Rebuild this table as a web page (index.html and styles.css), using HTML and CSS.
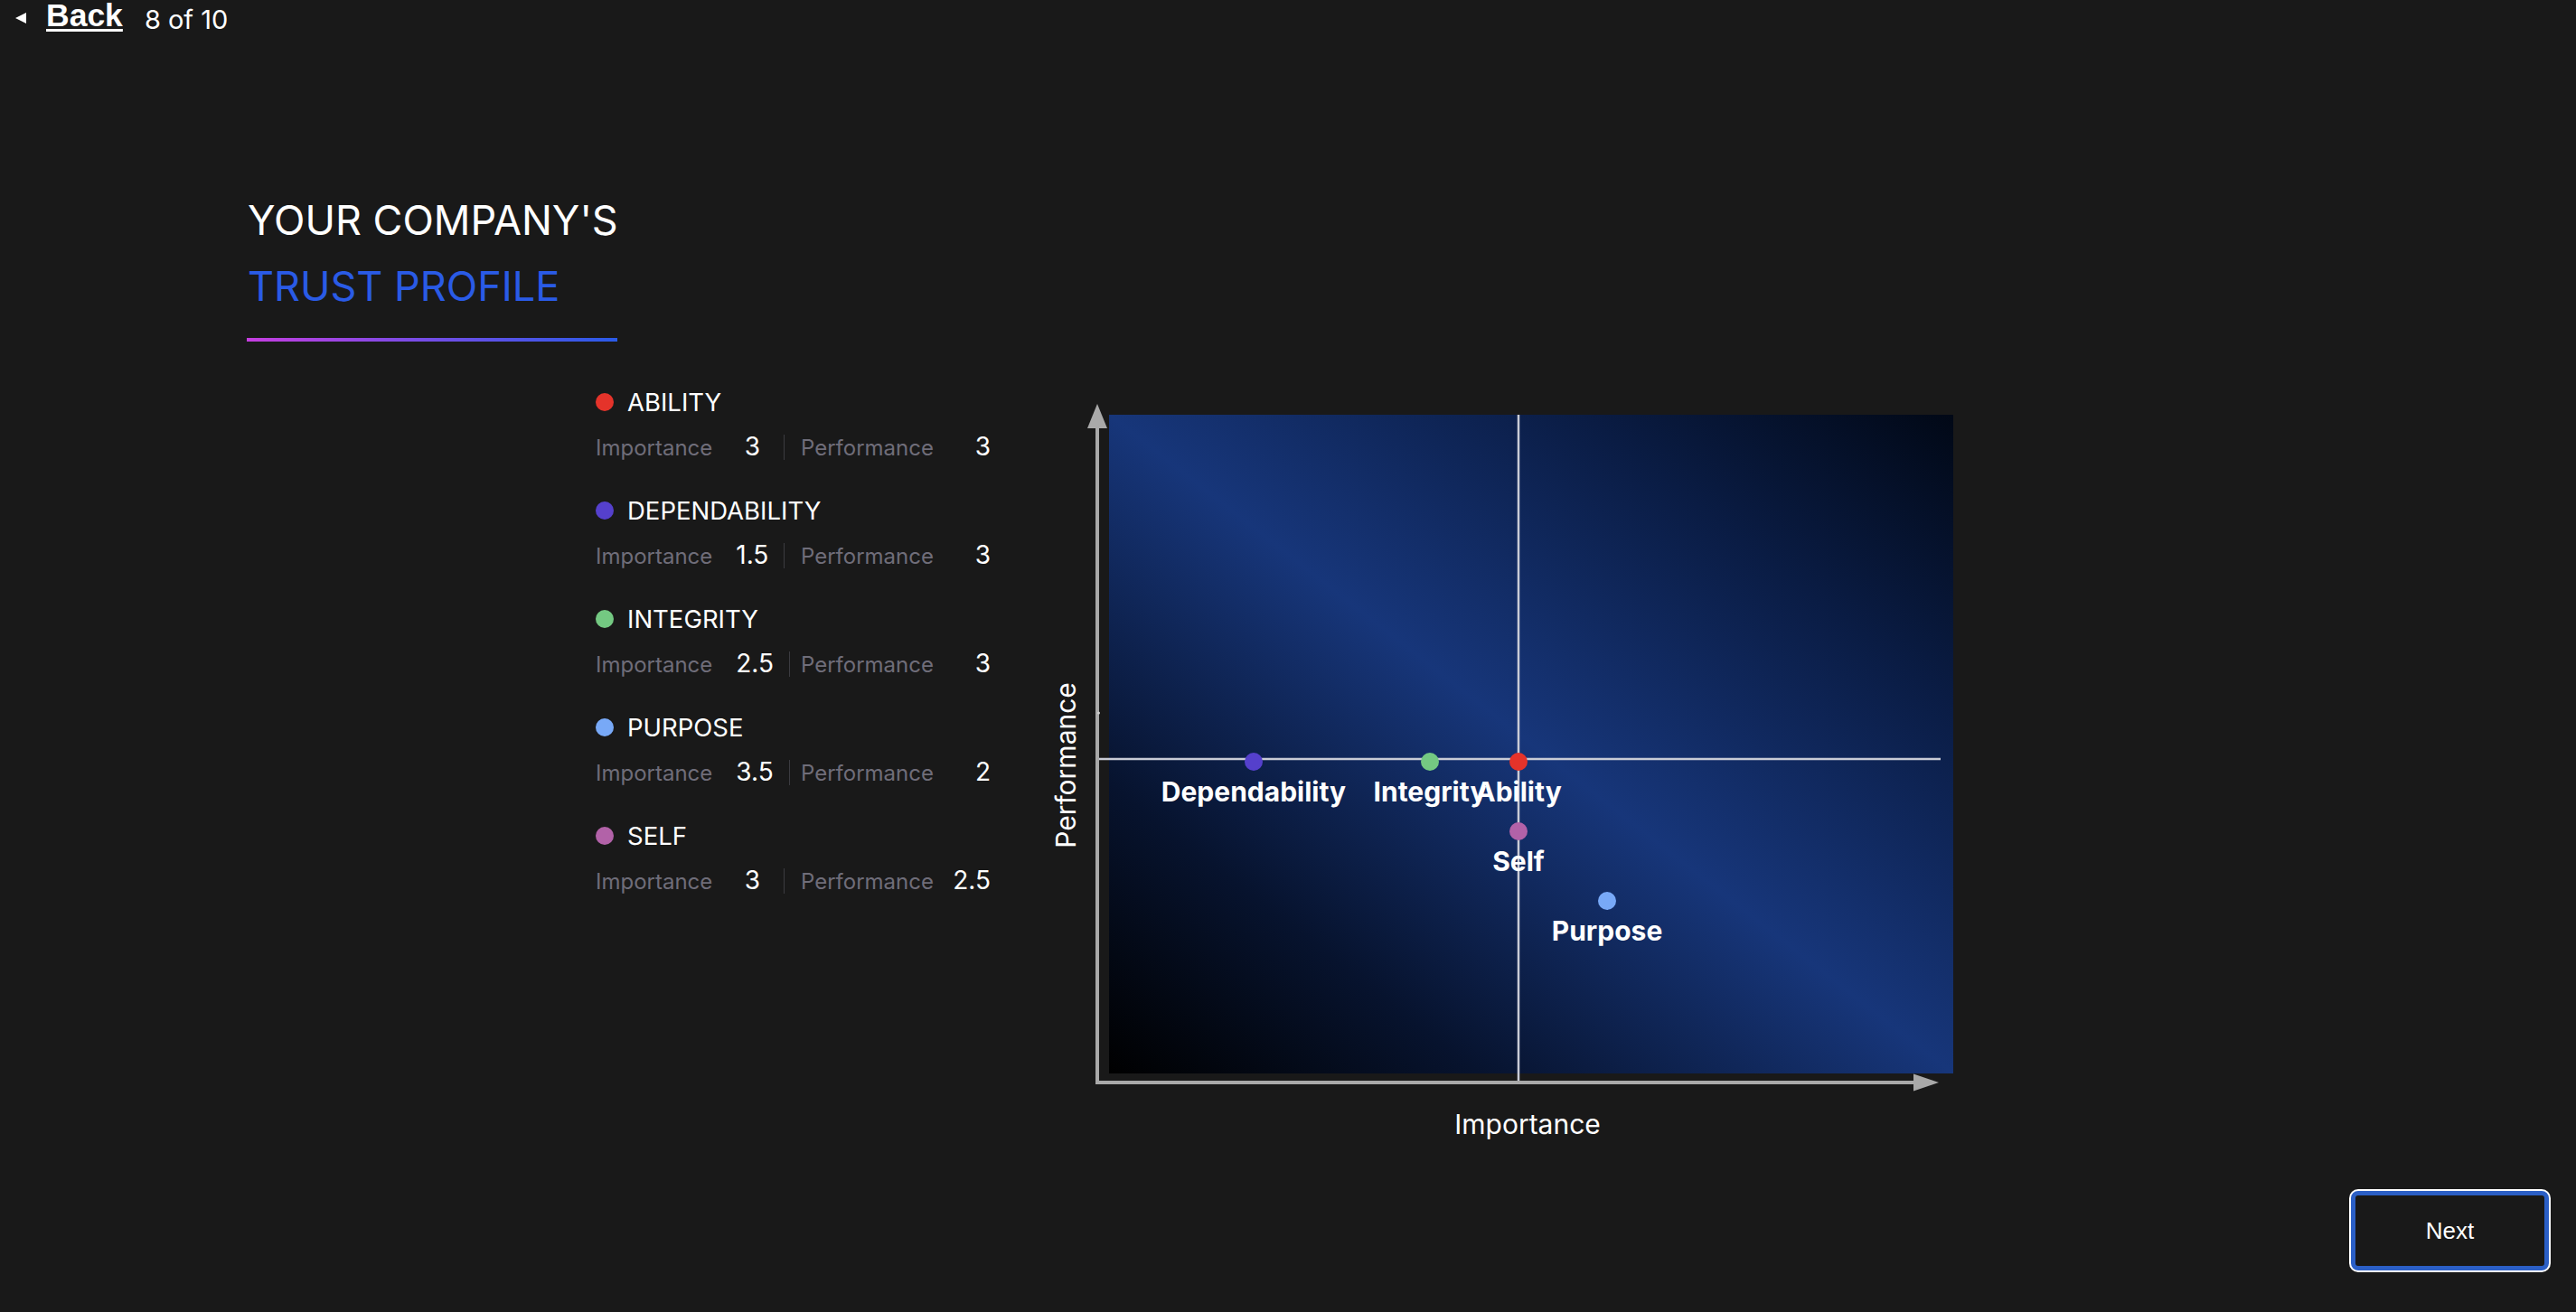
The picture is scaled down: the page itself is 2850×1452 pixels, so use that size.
FILE: index.html
```html
<!DOCTYPE html>
<html lang="en">
<head>
<meta charset="utf-8">
<title>Trust Profile</title>
<link rel="stylesheet" href="styles.css">
</head>
<body>
<div class="page">
  <header class="topbar">
    <svg class="back-arrow" width="14" height="14" viewBox="0 0 14 14"><path d="M1 7 L13 1 L13 13 Z" fill="#ffffff"/></svg>
    <a class="back-link" href="#">Back</a>
    <span class="counter">8 of 10</span>
  </header>

  <section class="content">
    <div class="hero">
      <h1 class="title">
        <span class="title-line">YOUR COMPANY'S</span>
        <span class="title-line accent">TRUST PROFILE</span>
      </h1>
      <div class="title-rule"></div>
    </div>

    <div class="main">
      <div class="legend">
        <div class="item">
          <div class="item-head"><span class="dot dot-ability"></span><span class="item-name">ABILITY</span></div>
          <div class="item-row"><span class="imp"><span class="lbl">Importance</span><span class="val">3</span><span class="sep"></span></span><span class="lbl">Performance</span><span class="val perf">3</span></div>
        </div>
        <div class="item">
          <div class="item-head"><span class="dot dot-dependability"></span><span class="item-name">DEPENDABILITY</span></div>
          <div class="item-row"><span class="imp"><span class="lbl">Importance</span><span class="val">1.5</span><span class="sep"></span></span><span class="lbl">Performance</span><span class="val perf">3</span></div>
        </div>
        <div class="item">
          <div class="item-head"><span class="dot dot-integrity"></span><span class="item-name">INTEGRITY</span></div>
          <div class="item-row"><span class="imp"><span class="lbl">Importance</span><span class="val">2.5</span><span class="sep"></span></span><span class="lbl">Performance</span><span class="val perf">3</span></div>
        </div>
        <div class="item">
          <div class="item-head"><span class="dot dot-purpose"></span><span class="item-name">PURPOSE</span></div>
          <div class="item-row"><span class="imp"><span class="lbl">Importance</span><span class="val">3.5</span><span class="sep"></span></span><span class="lbl">Performance</span><span class="val perf">2</span></div>
        </div>
        <div class="item">
          <div class="item-head"><span class="dot dot-self"></span><span class="item-name">SELF</span></div>
          <div class="item-row"><span class="imp"><span class="lbl">Importance</span><span class="val">3</span><span class="sep"></span></span><span class="lbl">Performance</span><span class="val perf">2.5</span></div>
        </div>
      </div>

      <svg class="chart" width="1020" height="830" viewBox="0 0 1020 830">
        <defs>
          <linearGradient id="bg" x1="0" y1="1" x2="1" y2="0">
            <stop offset="0" stop-color="#000000"/>
            <stop offset="0.22" stop-color="#07132e"/>
            <stop offset="0.5" stop-color="#17367a"/>
            <stop offset="0.78" stop-color="#0a1c44"/>
            <stop offset="1" stop-color="#010816"/>
          </linearGradient>
        </defs>
        <rect x="77" y="18" width="934" height="729" fill="url(#bg)"/>
        <line x1="530" y1="18" x2="530" y2="755" stroke="#c9ccd6" stroke-width="2.5"/>
        <line x1="66" y1="399" x2="997" y2="399" stroke="#c9ccd6" stroke-width="2.5"/>
        <line x1="64" y1="30" x2="64" y2="759" stroke="#a9a9a9" stroke-width="4"/>
        <path d="M64 6 L75 33 L53 33 Z" fill="#a9a9a9"/>
        <line x1="62" y1="757" x2="970" y2="757" stroke="#a9a9a9" stroke-width="4"/>
        <path d="M995 757 L967 747.5 L967 766.5 Z" fill="#a9a9a9"/>
        <circle cx="65.5" cy="348" r="1.5" fill="#d0d0d0"/>

        <circle cx="237" cy="402" r="10" fill="#5540cc"/>
        <circle cx="432" cy="402" r="10" fill="#74c982"/>
        <circle cx="530" cy="402" r="10" fill="#e5332a"/>
        <circle cx="530" cy="479" r="10" fill="#b262a8"/>
        <circle cx="628" cy="556" r="10" fill="#78a9f7"/>

        <g class="pt-label">
          <text x="237" y="446">Dependability</text>
          <text x="432" y="446">Integrity</text>
          <text x="530" y="446">Ability</text>
          <text x="530" y="523">Self</text>
          <text x="628" y="600">Purpose</text>
        </g>

        <text class="axis-label" x="40" y="406" transform="rotate(-90 40 406)">Performance</text>
        <text class="axis-label" x="540" y="814">Importance</text>
      </svg>
    </div>
  </section>

  <footer class="footer">
    <button class="next-btn" type="button">Next</button>
  </footer>
</div>
</body>
</html>
```

FILE: styles.css
```css
* { box-sizing: border-box; }

html, body {
  margin: 0;
  padding: 0;
  background: #191919;
  overflow: hidden;
}

body {
  font-family: Inter, "Noto Sans", sans-serif;
  color: #ffffff;
}

.page {
  min-height: 100vh;
  display: flex;
  flex-direction: column;
}

/* Top bar */
.topbar {
  display: flex;
  align-items: flex-start;
  padding-left: 16px;
  height: 40px;
}

.back-arrow {
  margin-top: 13px;
  flex-shrink: 0;
}

.back-link {
  margin-left: 21px;
  font-family: "Liberation Sans", Arial, sans-serif;
  font-weight: 700;
  font-size: 35.5px;
  line-height: 34px;
  color: #ffffff;
  text-decoration: underline;
  text-decoration-thickness: 3px;
  text-underline-offset: 3px;
}

.counter {
  margin-left: 24px;
  margin-top: 5px;
  font-size: 29px;
  line-height: 34px;
  color: #ffffff;
}

/* Content */
.content {
  padding-left: 273px;
}

.hero {
  margin-top: 167px;
}

.title {
  margin: 0;
  font-weight: 400;
  font-size: 45px;
  line-height: 73px;
  display: flex;
  flex-direction: column;
  padding-left: 1px;
}

.title-line { color: #ffffff; }
.title-line.accent { color: #2a5be6; }

.title-rule {
  width: 410px;
  height: 4px;
  margin-top: 21px;
  background: linear-gradient(90deg, #c63ee0 0%, #7a4ce6 45%, #2a5be8 100%);
}

.main {
  display: flex;
  align-items: flex-start;
  margin-top: 50.5px;
  padding-left: 386px;
}

/* Legend */
.legend {
  width: 441px;
  flex-shrink: 0;
  display: flex;
  flex-direction: column;
  gap: 36.5px;
}

.item-head {
  display: flex;
  align-items: center;
  height: 32px;
}

.dot {
  width: 20px;
  height: 20px;
  border-radius: 50%;
  flex-shrink: 0;
}

.dot-ability { background: #e5332a; }
.dot-dependability { background: #5540cc; }
.dot-integrity { background: #74c982; }
.dot-purpose { background: #78a9f7; }
.dot-self { background: #b262a8; }

.item-name {
  margin-left: 15px;
  font-size: 27.5px;
  line-height: 32px;
  color: #ffffff;
}

.item-row {
  display: flex;
  align-items: baseline;
  margin-top: 17.5px;
}

.imp {
  display: flex;
  align-items: baseline;
  width: 227px;
  flex-shrink: 0;
}

.lbl {
  font-size: 24px;
  line-height: 32px;
  color: #6f6d79;
}

.val {
  margin-left: 26px;
  min-width: 36px;
  text-align: center;
  font-size: 28px;
  line-height: 32px;
  color: #ffffff;
}

.val.perf {
  margin-left: 0;
  min-width: 63px;
  text-align: right;
}

.sep {
  align-self: center;
  width: 1px;
  height: 28px;
  margin-left: 17px;
  background: #3b3b40;
}

/* Chart */
.chart {
  display: block;
  flex-shrink: 0;
  margin-left: 50px;
  margin-top: 12px;
}

.pt-label text {
  font-family: Inter, "Noto Sans", sans-serif;
  font-weight: 700;
  font-size: 30px;
  fill: #ffffff;
  text-anchor: middle;
}

.axis-label {
  font-family: Inter, "Noto Sans", sans-serif;
  font-weight: 400;
  font-size: 30px;
  fill: #ffffff;
  text-anchor: middle;
}

/* Footer */
.footer {
  margin-top: auto;
  display: flex;
  justify-content: flex-end;
  padding: 0 30px 46px 0;
}

.next-btn {
  width: 219px;
  height: 88px;
  border: 5px solid #2b5fc6;
  border-radius: 8px;
  box-shadow: 0 0 0 2px #ffffff;
  background: #191919;
  color: #ffffff;
  font-family: "Liberation Sans", Arial, sans-serif;
  font-size: 26px;
  cursor: pointer;
}
```
